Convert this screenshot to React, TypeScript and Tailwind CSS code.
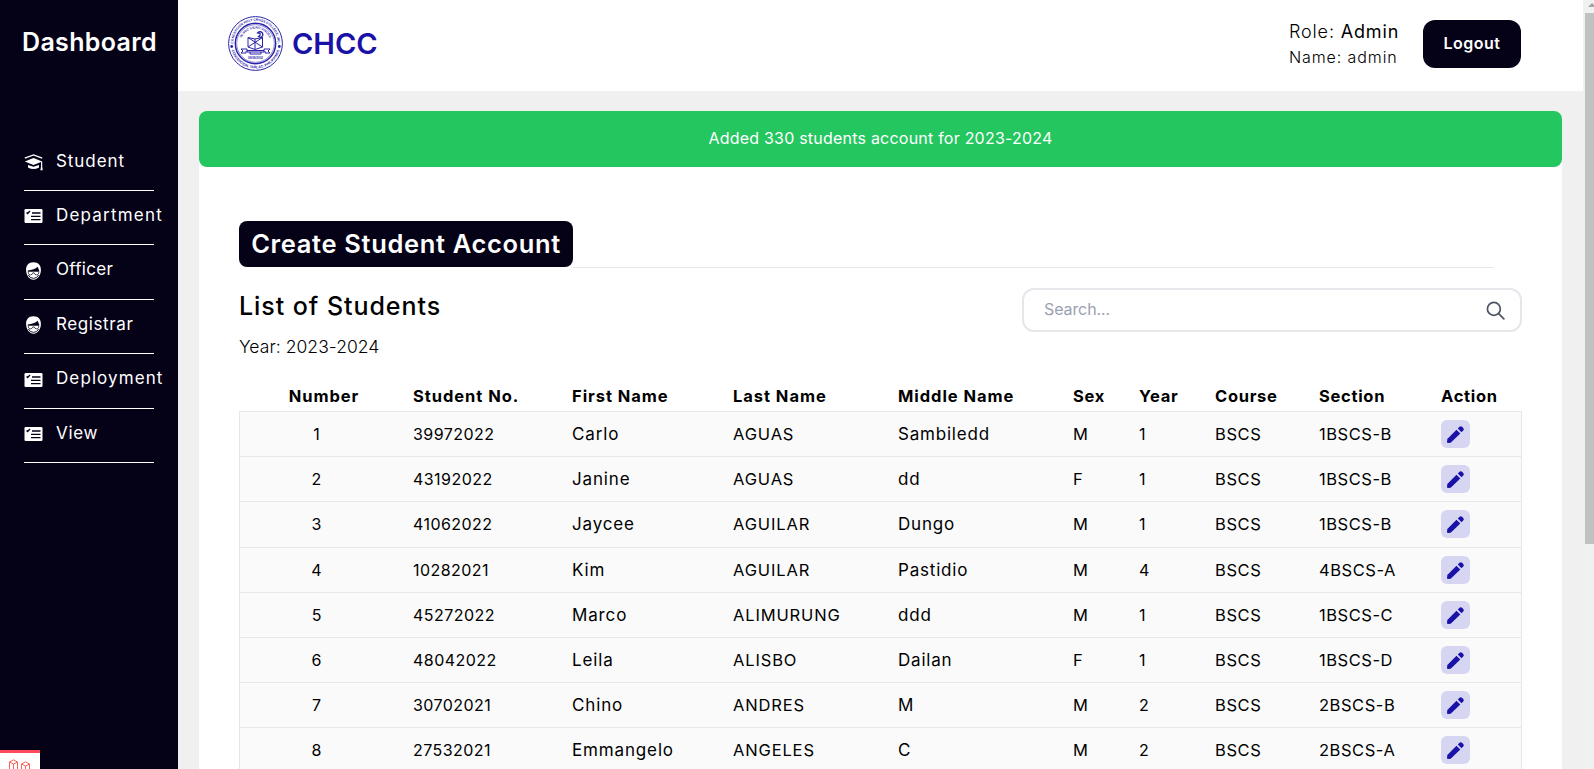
import React from "react";

type IconName = "cap" | "list" | "face";

const nav: { label: string; icon: IconName; cls: string }[] = [
  { label: "Student", icon: "cap", cls: "h-[54px] tracking-[0.95px]" },
  { label: "Department", icon: "list", cls: "h-[54px] tracking-[1.2px]" },
  { label: "Officer", icon: "face", cls: "h-[55px] tracking-[0.3px]" },
  { label: "Registrar", icon: "face", cls: "h-[54px] tracking-[0.6px]" },
  { label: "Deployment", icon: "list", cls: "h-[55px] tracking-[1.1px]" },
  { label: "View", icon: "list", cls: "h-[54px] tracking-[0.7px]" },
];

const rows = [
  ["1", "39972022", "Carlo", "AGUAS", "Sambiledd", "M", "1", "BSCS", "1BSCS-B"],
  ["2", "43192022", "Janine", "AGUAS", "dd", "F", "1", "BSCS", "1BSCS-B"],
  ["3", "41062022", "Jaycee", "AGUILAR", "Dungo", "M", "1", "BSCS", "1BSCS-B"],
  ["4", "10282021", "Kim", "AGUILAR", "Pastidio", "M", "4", "BSCS", "4BSCS-A"],
  ["5", "45272022", "Marco", "ALIMURUNG", "ddd", "M", "1", "BSCS", "1BSCS-C"],
  ["6", "48042022", "Leila", "ALISBO", "Dailan", "F", "1", "BSCS", "1BSCS-D"],
  ["7", "30702021", "Chino", "ANDRES", "M", "M", "2", "BSCS", "2BSCS-B"],
  ["8", "27532021", "Emmangelo", "ANGELES", "C", "M", "2", "BSCS", "2BSCS-A"],
];

const heads = ["Number", "Student No.", "First Name", "Last Name", "Middle Name", "Sex", "Year", "Course", "Section", "Action"];
const grid = "grid grid-cols-[174px_159px_161px_165px_175px_66px_76px_104px_122px_1fr]";
const cellStyles = [
  "pr-[19px] text-center text-[16px]",
  "text-[16px] tracking-[0.45px]",
  "pt-0.5 text-[17px] tracking-[0.85px]",
  "text-[16.5px] tracking-[0.85px]",
  "pt-0.5 text-[17px] tracking-[0.8px]",
  "text-[16.5px]",
  "text-[16px]",
  "text-[16.5px] tracking-[0.6px]",
  "text-[16.5px] tracking-[0.55px]",
];

function NavIcon({ name }: { name: IconName }) {
  if (name === "cap")
    return (
      <svg className="mb-[3px] h-[18px] w-[19px] shrink-0 fill-white" viewBox="0 0 19 18">
        <path d="M.8 5.200 9.500 2 18.200 5.200" fill="none" stroke="white" strokeWidth="1.300" />
        <path d="M9.500 5 18.200 8.600 9.500 12 .8 8.600z" />
        <path d="M4 12 9.500 13.800 15 12v2.400Q9.500 17.600 4 14.400z" />
        <path d="M17 8.500h1.200v5.200l.6 3.600h-2.400l.6-3.600z" />
      </svg>
    );
  if (name === "list")
    return (
      <svg className="mb-[3px] h-[18px] w-[19px] shrink-0" viewBox="0 0 19 18">
        <rect x=".5" y="2" width="18" height="14" rx="1.200" fill="white" />
        <path d="M2.600 5.600 3.600 6.500 6 4M8 6h8.500M7 9.300h9.500M7 12.600h9.500" fill="none" stroke="#050217" strokeWidth="1.300" />
      </svg>
    );
  return (
    <svg className="mb-[3px] h-[18px] w-[19px] shrink-0" viewBox="0 0 19 18">
      <path d="M9.500.3c5 0 7.600 3.200 7.400 8.200-.2 5-3.400 9.200-7.400 9.200S2.300 13.500 2.100 8.500C1.900 3.500 4.500.3 9.500.3z" fill="white" />
      <path d="M3.800 8.600C8 8.200 11.500 6.800 13.600 4.800L15.200 8.600v1H3.800z" fill="#050217" />
      <path d="M4.300 9.400h4.500l.7.700.7-.7h4.500v1.800q-.5 1.700-2.200 1.700t-2.300-2h-1.400q-.6 2-2.300 2t-2.200-1.700z" fill="white" stroke="#050217" strokeWidth=".7" />
      <path d="M4.300 13q1.700 3.300 5.200 3.400 3.500-.1 5.200-3.400" fill="none" stroke="#050217" strokeWidth=".9" />
    </svg>
  );
}

function Pencil() {
  return (
    <svg className="size-[17px] fill-[#1a12a6]" viewBox="0 0 17 17">
      <path d="M0 16q0 1 1 1l2.700-.3L13.300 7.500 9.500 3.700.3 13z" />
      <path d="M10.800 2.500 12.500.8q1.300-1.200 2.600 0l1.100 1.100q1.200 1.300 0 2.600L14.500 6.200z" />
    </svg>
  );
}

function Seal() {
  return (
    <svg className="mb-1 size-[55px] overflow-visible text-[#2a22a8]" viewBox="0 0 55 55" fill="none" stroke="currentColor">
      <defs>
        <path id="outer-top" d="M5.500 30A22.200 22.200 0 1 1 49.500 30" />
        <path id="outer-bottom" d="M3.300 33A24.800 24.800 0 0 0 51.700 33" />
        <path id="inner-top" d="M12.500 27.500a15 15 0 1 1 30 0" />
      </defs>
      <circle cx="27.500" cy="27.500" r="26.900" strokeWidth="1" />
      <circle cx="27.500" cy="27.500" r="20.200" strokeWidth="1.400" />
      <circle cx="27.500" cy="27.500" r="18.800" strokeWidth=".5" />
      <g fill="currentColor" stroke="none" className="font-['Liberation_Sans'] font-bold">
        <text fontSize="3.300"><textPath href="#outer-top" startOffset="50%" textAnchor="middle">CONCEPCION HOLY CROSS COLLEGE, INC.</textPath></text>
        <text fontSize="3.500"><textPath href="#outer-bottom" startOffset="50%" textAnchor="middle">CONCEPCION, TARLAC, PHILIPPINES</textPath></text>
        <text fontSize="3.200"><textPath href="#inner-top" startOffset="50%" textAnchor="middle">IN HOC SIGNO VINCES</textPath></text>
        <text x="27.500" y="43" fontSize="3" textAnchor="middle">09/09/2002</text>
        <circle cx="3.700" cy="30.500" r="1.400" />
        <circle cx="51.300" cy="30.500" r="1.400" />
      </g>
      <path d="M20 21.500 27 23l7.500-1.500V31L27 33.500 20 31zM20 21.500 34.500 31M34.500 21.500 20 31M27 23v10" strokeWidth="1" />
      <path d="M29.500 17q2.500-2.500 5 0 1.300 2.500-1.500 4.500l-2.500-1q2.500-1.500 1.500-3z" strokeWidth="1.200" />
      <path d="M13 33h6v3h17v-3h6l-2 2 2 2h-5v-2M13 33l2 2-2 2h5v-2M19 34.500h17M22 36v2h11v-2" strokeWidth="1" />
    </svg>
  );
}

export default function App() {
  return (
    <div className="flex h-[769px] w-full overflow-hidden bg-[#f0f0f0] font-['Inter',sans-serif] text-black">
      <aside className="relative flex w-[178px] shrink-0 flex-col bg-[#050217] text-white">
        <h1 className="mt-[26px] ml-[22px] text-[25px] leading-8 font-semibold tracking-[0.35px]">Dashboard</h1>
        <nav className="mt-[79px] flex flex-col pl-6">
          {nav.map((item) => (
            <a key={item.label} className={`flex w-[130px] items-center gap-[13px] border-b border-white text-[17px] font-normal whitespace-nowrap ${item.cls}`}>
              <NavIcon name={item.icon} />
              <span className="-mt-1">{item.label}</span>
            </a>
          ))}
        </nav>
        <div className="absolute bottom-0 left-0 h-[19px] w-10 overflow-hidden border-t-[3px] border-[#ff4b5c] bg-white">
          <svg className="mt-1.5 ml-2 h-[21px] w-[23px]" viewBox="0 0 23 21" fill="none" stroke="#f9635a">
            <path d="M1.500 20V3L5.500.8 9.500 3v17M1.500 3l4 2 4-2M5.500 5v15M13.500 10V5L17.500 2.800 21.500 5v5l-4 2zM13.500 5l4 2 4-2M17.500 7v5" />
          </svg>
        </div>
      </aside>
      <div className="flex min-w-0 flex-1 flex-col">
        <header className="mr-[11px] flex h-[91px] shrink-0 items-center bg-white pr-[62px] pl-[50px]">
          <Seal />
          <span className="mb-[3px] ml-[9px] text-[29px] font-semibold text-[#1a12a6]">CHCC</span>
          <div className="ml-auto w-[134px] pb-0.5 font-light">
            <p className="text-lg leading-[26px] tracking-[0.85px] whitespace-nowrap">Role: <span className="font-normal">Admin</span></p>
            <p className="text-base leading-[25px] tracking-[0.9px] whitespace-nowrap">Name: admin</p>
          </div>
          <button className="mb-[3px] h-12 w-[98px] rounded-xl bg-[#050217] pb-0.5 text-base font-semibold tracking-[0.5px] text-white">Logout</button>
        </header>
        <main className="mt-5 ml-[21px] flex w-[1363px] flex-1 flex-col rounded-t-lg bg-white">
          <div className="flex h-14 shrink-0 items-center justify-center rounded-lg bg-[#24c65f] pb-0.5 text-base tracking-[0.22px] text-white">Added 330 students account for 2023-2024</div>
          <section className="mt-[54px] flex flex-col px-10">
            <div className="flex h-[47px] items-end">
              <button className="mb-px h-[46px] w-[334px] shrink-0 rounded-lg bg-[#050217] text-[25.5px] font-semibold tracking-[0.65px] whitespace-nowrap text-white">Create Student Account</button>
              <div className="mr-7 h-px flex-1 bg-gray-200" />
            </div>
            <div className="flex h-[109px] justify-between pt-5">
              <div>
                <h2 className="mt-0.5 text-[25px] leading-8 font-medium tracking-[0.95px]">List of Students</h2>
                <p className="mt-[11px] text-[17.5px] leading-7 font-light tracking-[0.05px]">Year: 2023-2024</p>
              </div>
              <div className="flex h-11 w-[500px] items-center justify-between rounded-xl border-2 border-gray-200 pr-[15px] pl-5">
                <span className="pb-0.5 text-base tracking-[-0.1px] text-gray-400">Search...</span>
                <svg className="size-[19px]" viewBox="0 0 20 20" fill="none" stroke="#4b5563" strokeWidth="1.800" strokeLinecap="round">
                  <circle cx="8.300" cy="8.300" r="6.800" />
                  <path d="m13.300 13.300 5.500 5.500" />
                </svg>
              </div>
            </div>
            <div className={`${grid} h-[34px] shrink-0 items-center pt-1 text-[16.5px] font-bold tracking-[0.95px] whitespace-nowrap`}>
              {heads.map((h, i) => (
                <span key={h} className={i === 0 ? "pr-1 text-center" : i > 4 ? "tracking-[0.7px]" : ""}>{h}</span>
              ))}
            </div>
            <div className="border-x border-t border-gray-200 bg-[#fafafa]">
              {rows.map((r, n) => (
                <div key={r[0]} className={`${grid} -mx-px items-center border-b border-gray-200 ${n === 2 ? "h-[46px] pb-px" : "h-[45px]"}`}>
                  {r.map((c, i) => (
                    <span key={i} className={cellStyles[i]}>{c}</span>
                  ))}
                  <button className="flex h-7 w-[29px] items-center justify-center rounded-md bg-[#d6d6f3]">
                    <Pencil />
                  </button>
                </div>
              ))}
            </div>
          </section>
        </main>
      </div>
      <div className="absolute top-0 right-0 flex h-[769px] w-[9px] flex-col overflow-hidden bg-[#f1f1f1]">
        <svg className="h-[13px] w-[9px]" viewBox="0 0 9 13"><path d="M3 7 7 3l4 4z" fill="#a3a3a3" /></svg>
        <div className="h-[531px] bg-[#c1c1c1]" />
      </div>
    </div>
  );
}
